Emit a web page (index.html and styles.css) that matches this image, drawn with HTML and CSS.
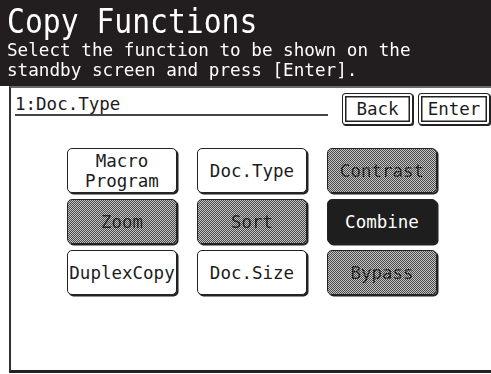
FILE: index.html
```html
<!DOCTYPE html>
<html>
<head>
  <meta charset="UTF-8">
  <title>Copy Functions</title>
  <link rel="stylesheet" href="styles.css">
</head>
<body>
  <div class="header">
    <div class="title">Copy Functions</div>
    <div class="hint">Select the function to be shown on the<br>standby screen and press [Enter].</div>
  </div>

  <div class="panel">
    <div class="toprow">
      <div class="field">1:Doc.Type</div>
      <button class="key">Back</button>
      <button class="key">Enter</button>
    </div>

    <div class="grid">
      <button class="fn">Macro<br>Program</button>
      <button class="fn">Doc.Type</button>
      <button class="fn off"><span>Contrast</span></button>
      <button class="fn off"><span>Zoom</span></button>
      <button class="fn off"><span>Sort</span></button>
      <button class="fn on">Combine</button>
      <button class="fn">DuplexCopy</button>
      <button class="fn">Doc.Size</button>
      <button class="fn off"><span>Bypass</span></button>
    </div>
  </div>
</body>
</html>
```

FILE: styles.css
```css
html, body {
  margin: 0;
  background: #fff;
  font-family: "DejaVu Sans Mono", "Liberation Mono", monospace;
  color: #1c1c1c;
}

.header {
  height: 86px;
  box-sizing: border-box;
  background: #221e1f;
  color: #fff;
  padding: 4px 0 0 7px;
}

/* the panel font is tall and narrow, so squeeze the mono glyphs */
.title {
  font-size: 33px;
  line-height: 35px;
  transform: scaleX(0.9);
  transform-origin: left;
  white-space: nowrap;
}

.hint {
  margin-top: 1px;
  font-size: 18px;
  line-height: 19.5px;
  transform: scaleX(0.98);
  transform-origin: left;
  white-space: nowrap;
}

.panel {
  margin-left: 9px;
  height: 287px;
  box-sizing: border-box;
  border-left: 2px solid #333;
  border-top: 2px solid #6a6a6a;
  border-bottom: 3px solid #222;
}

.toprow {
  display: flex;
  align-items: flex-start;
  padding: 5px 0 0 4px;
}

.field {
  width: 313px;
  margin-top: 1px;
  height: 20px;
  line-height: 20px;
  font-size: 17.5px;
  border-bottom: 2px solid #444;
  margin-right: 14px;
}

.key {
  height: 32px;
  width: 71px;
  padding: 0;
  margin-right: 5px;
  background: #fff;
  border: 1.5px solid #222;
  border-radius: 3px;
  box-shadow: inset 0 0 0 2px #fff, inset 0 0 0 3.5px #222, 1px 1px 0 #222;
  font-family: inherit;
  font-size: 17.5px;
  color: #1c1c1c;
}

.key + .key {
  width: 72px;
  margin-right: 0;
}

.grid {
  display: grid;
  grid-template-columns: repeat(3, 110px);
  grid-auto-rows: 45px;
  column-gap: 20px;
  row-gap: 6px;
  margin: 23px 0 0 56px;
}

.fn {
  padding: 0;
  background: #fff;
  border: 1.5px solid #222;
  border-radius: 5px;
  box-shadow: 1.5px 1.5px 0 #222;
  font-family: inherit;
  font-size: 17.5px;
  line-height: 20px;
  color: #1c1c1c;
}

.fn.off {
  background: repeating-conic-gradient(#4a4a4a 0 25%, #c4c4c4 0 50%) 0 0 / 2px 2px;
}

.fn.off span {
  background: repeating-conic-gradient(#000 0 25%, #4a4a4a 0 50%) 1px 0 / 2px 2px;
  -webkit-background-clip: text;
  background-clip: text;
  color: transparent;
}

.fn.on {
  background: #1e1e1e;
  color: #fff;
}
```
